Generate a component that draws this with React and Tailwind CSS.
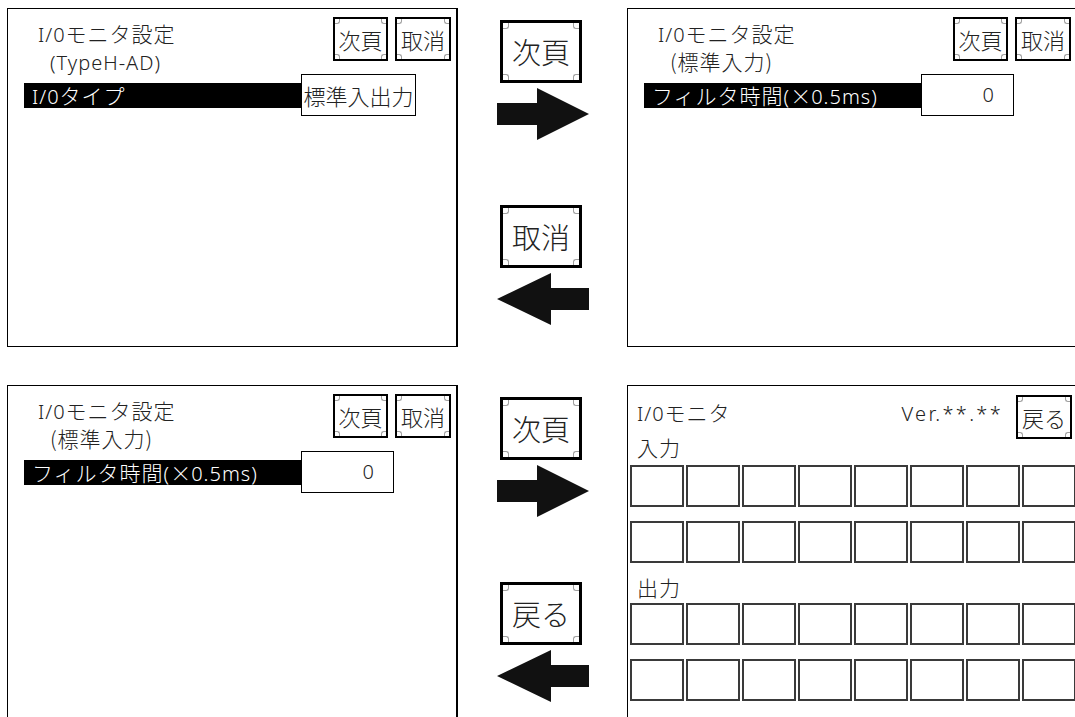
import React from 'react';

// 半角部分
const L = ({ children, wide }) => (
  <span className={`font-['Noto_Sans',sans-serif] font-light text-[20px] ${wide ? 'tracking-[2.3px]' : 'tracking-[1px]'}`}>{children}</span>
);

const Corners = ({ size }) => {
  const s = size === 'big' ? 'size-[6px]' : 'size-[5px]';
  return (
    <>
      <span className={`absolute top-0 left-0 ${s} border-r border-b border-[#a0a0a0] rounded-br-[3px]`} />
      <span className={`absolute top-0 right-0 ${s} border-l border-b border-[#a0a0a0] rounded-bl-[3px]`} />
      <span className={`absolute bottom-0 left-0 ${s} border-r border-t border-[#a0a0a0] rounded-tr-[3px]`} />
      <span className={`absolute bottom-0 right-0 ${s} border-l border-t border-[#a0a0a0] rounded-tl-[3px]`} />
    </>
  );
};

const FrameButton = ({ children, big, wide }) => (
  <div
    className={
      big
        ? 'relative flex items-center justify-center bg-white border-[3px] border-black w-[82px] h-[63px] text-[29px] leading-none tracking-[0px]'
        : `relative flex items-center justify-center bg-white border-2 border-black ${wide ? 'w-[56px]' : 'w-[55px]'} h-[44px] text-[22px] leading-none tracking-[0px]`
    }
  >
    <Corners size={big ? 'big' : 'small'} />
    <span className="pb-[1px]">{children}</span>
  </div>
);

const ArrowRight = () => (
  <svg width="92" height="52" viewBox="0 0 92 52">
    <path d="M0 15H40V0L92 26L40 52V37H0Z" fill="#111" />
  </svg>
);

const ArrowLeft = () => (
  <svg width="92" height="52" viewBox="0 0 92 52">
    <path d="M0 26L54 0V15H92V37H54V52Z" fill="#111" />
  </svg>
);

const SettingPanel = ({ subtitle, label, value, valueRight }) => (
  <div className="w-[451px] h-[339px] border border-black border-r-2 bg-white shrink-0">
    <div className="flex justify-between pt-[8px] h-[65px]">
      <div className="pl-[30px] pt-[5px]">
        <div className="leading-[22px] tracking-[1px]">
          <L>I/0</L>モニタ設定
        </div>
        <div className="leading-[22px] tracking-[1px] mt-[4px] pl-[12px]">{subtitle}</div>
      </div>
      <div className="flex gap-[7px] pr-[5px]">
        <FrameButton>次頁</FrameButton>
        <FrameButton wide>取消</FrameButton>
      </div>
    </div>
    <div className="flex items-center h-[42px]">
      <div className="ml-[16px] w-[277px] h-[25px] bg-black text-white pl-[8px] leading-[25px] tracking-[1px] whitespace-nowrap">
        {label}
      </div>
      {valueRight ? (
        <div className="w-[93px] h-[42px] border border-black flex items-center justify-end pr-[18px]">
          <L>{value}</L>
        </div>
      ) : (
        <div className="w-[115px] h-[42px] border border-black flex items-center justify-center text-[22px] leading-none">
          {value}
        </div>
      )}
    </div>
  </div>
);

const Cells = () => (
  <div className="grid grid-cols-[repeat(8,54px)] gap-x-[2px] gap-y-[14px] ml-[2px]">
    {Array.from({ length: 16 }).map((_, i) => (
      <div key={i} className="h-[42px] border-2 border-[#3a3a3a]" />
    ))}
  </div>
);

const MonitorPanel = () => (
  <div className="w-[451px] h-[339px] border border-black bg-white shrink-0">
    <div className="flex justify-between items-start pt-[9px] h-[51px]">
      <div className="pl-[9px] pt-[6px] leading-[22px] tracking-[1px]">
        <L>I/0</L>モニタ
      </div>
      <div className="flex items-start gap-[13px] pr-[5px]">
        <div className="pt-[6px] leading-[22px]">
          <L wide>Ver.**.**</L>
        </div>
        <FrameButton wide>戻る</FrameButton>
      </div>
    </div>
    <div className="pl-[9px] mt-[-1px] leading-[22px] tracking-[1px]">入力</div>
    <div className="mt-[7px]">
      <Cells />
    </div>
    <div className="pl-[9px] mt-[13px] leading-[22px] tracking-[1px]">出力</div>
    <div className="mt-[5px]">
      <Cells />
    </div>
  </div>
);

const Middle = ({ back }) => (
  <div className="w-[169px] shrink-0 flex flex-col pl-[39px] pt-[12px]">
    <div className="ml-[3px]">
      <FrameButton big>次頁</FrameButton>
    </div>
    <div className="mt-[5px]">
      <ArrowRight />
    </div>
    <div className="ml-[3px] mt-[65px]">
      <FrameButton big>{back}</FrameButton>
    </div>
    <div className="mt-[5px]">
      <ArrowLeft />
    </div>
  </div>
);

const filterLabel = (
  <>
    フィルタ時間<L>(</L>
    <span className="inline-block w-[21px] text-center">×</span>
    <L>0.5ms)</L>
  </>
);

export default function App() {
  return (
    <div className="w-[1075px] h-[717px] overflow-hidden bg-white text-[#222] font-light text-[21px] font-['Noto_Sans_CJK_JP','Liberation_Sans',sans-serif]">
      <div className="flex pl-[7px] pt-[8px] w-[1100px]">
        <SettingPanel subtitle={<L>(TypeH-AD)</L>} label={<><L>I/0</L>タイプ</>} value="標準入出力" />
        <Middle back="取消" />
        <SettingPanel subtitle="(標準入力)" label={filterLabel} value="0" valueRight />
      </div>
      <div className="flex pl-[7px] mt-[38px] w-[1100px]">
        <SettingPanel subtitle="(標準入力)" label={filterLabel} value="0" valueRight />
        <Middle back="戻る" />
        <MonitorPanel />
      </div>
    </div>
  );
}
